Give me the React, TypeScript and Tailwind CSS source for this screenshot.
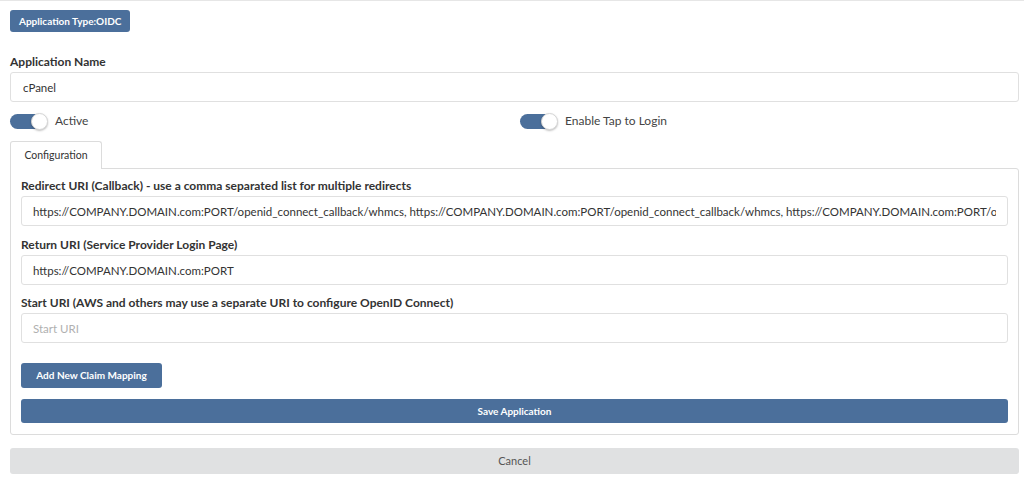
import React from 'react'

const redirect =
  'https://COMPANY.DOMAIN.com:PORT/openid_connect_callback/whmcs, https://COMPANY.DOMAIN.com:PORT/openid_connect_callback/whmcs, https://COMPANY.DOMAIN.com:PORT/openid_connect_callback/whmcs'

function Toggle({ label }: { label: string }) {
  return (
    <div className="flex items-center">
      <div className="relative w-[37px] h-[15px] rounded-full bg-[#4b6f9b]">
        <div className="absolute right-[-1px] top-[-1px] w-[17px] h-[17px] rounded-full bg-white border border-[#d6d6d6] shadow-[0_1px_2px_rgba(0,0,0,0.25)]" />
      </div>
      <span className="ml-[8px] text-[12px] text-[#444]">{label}</span>
    </div>
  )
}

function Field({ label, value, placeholder }: { label: string; value?: string; placeholder?: string }) {
  return (
    <div>
      <div className="text-[12px] font-bold leading-[16px] text-[#333]">{label}</div>
      <input
        readOnly
        value={value ?? ''}
        placeholder={placeholder}
        className="mt-[2px] w-full h-[30px] border border-[#e0e0e0] rounded-[3px] px-[11px] text-[11.5px] text-[#333] placeholder:text-[#b0b0b0] outline-none bg-white"
      />
    </div>
  )
}

export default function App() {
  return (
    <div
      className="w-full h-[483px] bg-white border-t border-[#e6e6e6] pt-[9px] pl-[10px] pr-[5px] text-[#333]"
      style={{ fontFamily: 'Lato, "Open Sans", sans-serif' }}
    >
      <div className="flex items-center w-fit h-[22px] px-[9px] rounded-[3px] bg-[#4b6f9b] text-white text-[10px] font-bold">
        Application Type:OIDC
      </div>

      <div className="mt-[22px] text-[12px] font-bold leading-[16px]">Application Name</div>
      <input
        readOnly
        value="cPanel"
        className="mt-[2px] w-full h-[30px] border border-[#e0e0e0] rounded-[3px] px-[12px] text-[11.5px] text-[#333] outline-none"
      />

      <div className="flex mt-[10px]">
        <div className="w-[510px]">
          <Toggle label="Active" />
        </div>
        <Toggle label="Enable Tap to Login" />
      </div>

      <div className="mt-[11px]">
        <div className="relative z-10 w-[92px] h-[28px] -mb-px bg-white border border-b-0 border-[#dcdcdc] rounded-t-[3px] flex items-center justify-center text-[10.5px] text-[#333]">
          Configuration
        </div>
        <div className="border border-[#dcdcdc] rounded-b-[3px] rounded-tr-[3px] px-[10px] pt-[9px] pb-[11px] flex flex-col">
          <Field label="Redirect URI (Callback) - use a comma separated list for multiple redirects" value={redirect} />
          <div className="mt-[11px]">
            <Field label="Return URI (Service Provider Login Page)" value="https://COMPANY.DOMAIN.com:PORT" />
          </div>
          <div className="mt-[10px]">
            <Field label="Start URI (AWS and others may use a separate URI to configure OpenID Connect)" placeholder="Start URI" />
          </div>
          <button className="mt-[20px] self-start h-[25px] w-[141px] rounded-[3px] bg-[#4b6f9b] text-white text-[10px] font-bold">
            Add New Claim Mapping
          </button>
          <button className="mt-[11px] w-full h-[24px] rounded-[3px] bg-[#4b6f9b] text-white text-[10px] font-bold">
            Save Application
          </button>
        </div>
      </div>

      <button className="mt-[13px] w-full h-[26px] rounded-[3px] bg-[#e0e1e2] text-[#555] text-[11px]">
        Cancel
      </button>
    </div>
  )
}
